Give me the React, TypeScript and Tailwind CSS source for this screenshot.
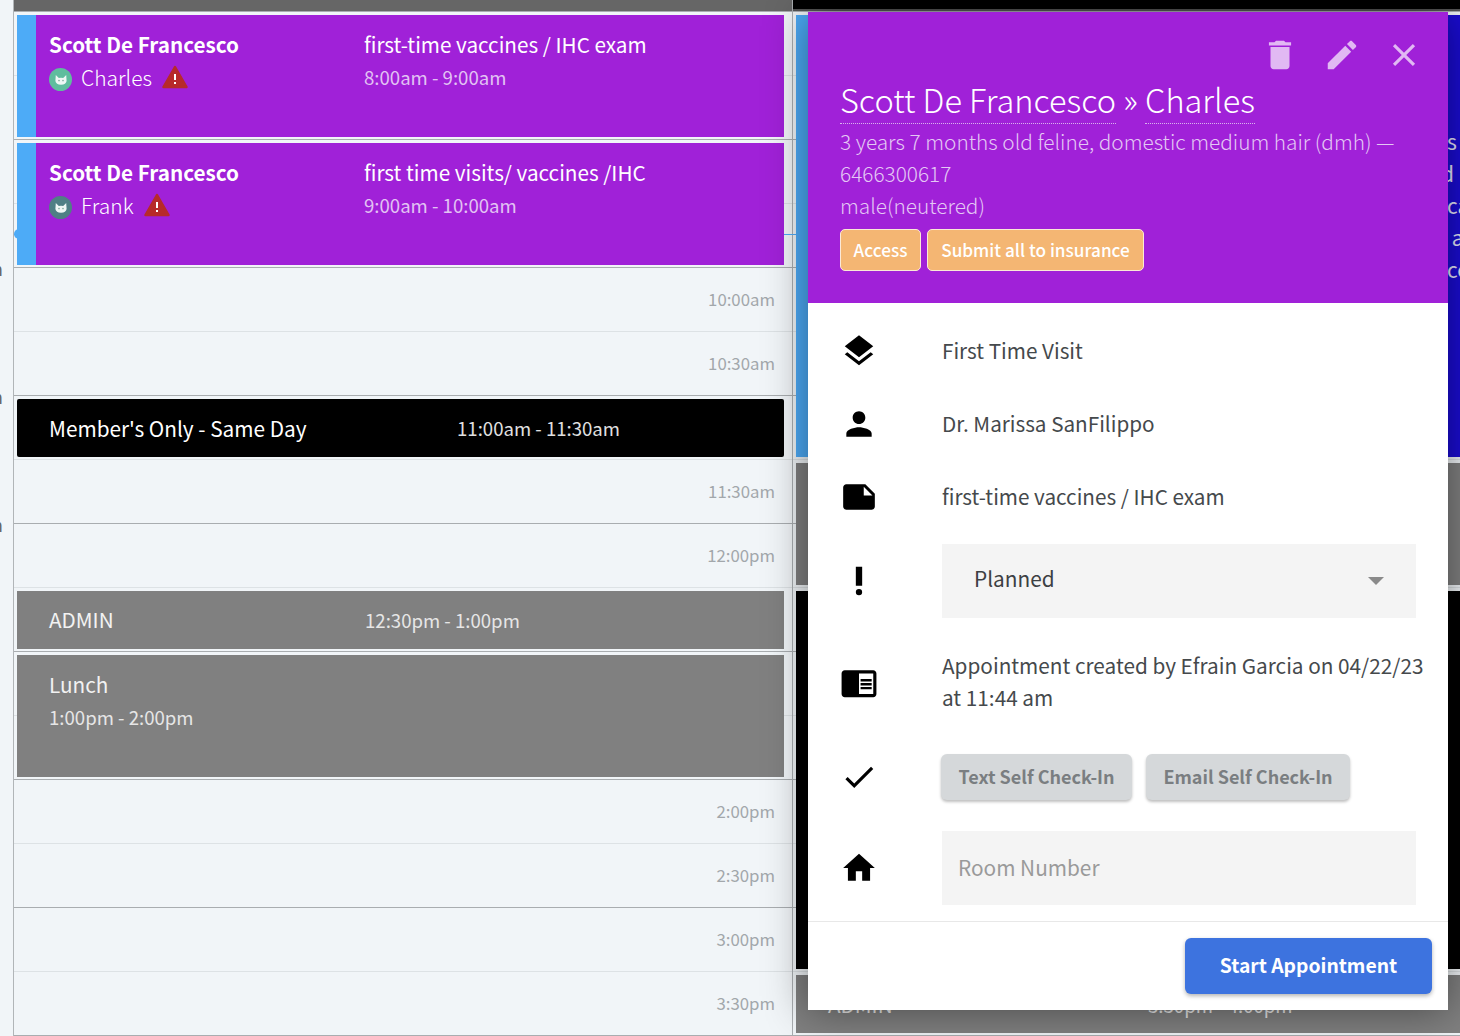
const ROWS = [
  "8:00am", "8:30am", "9:00am", "9:30am", "10:00am", "10:30am", "11:00am", "11:30am",
  "12:00pm", "12:30pm", "1:00pm", "1:30pm", "2:00pm", "2:30pm", "3:00pm", "3:30pm",
];

function Icon({ d, className }: { d: string; className: string }) {
  return (
    <svg viewBox="0 0 24 24" className={className} fill="currentColor">
      <path d={d} />
    </svg>
  );
}

const ICONS = {
  trash: "M6 19c0 1.1.9 2 2 2h8c1.1 0 2-.9 2-2V7H6v12zM19 4h-3.5l-1-1h-5l-1 1H5v2h14V4z",
  edit: "M3 17.25V21h3.75L17.81 9.94l-3.75-3.75L3 17.25zM20.71 7.04c.39-.39.39-1.02 0-1.41l-2.34-2.34c-.39-.39-1.02-.39-1.41 0l-1.83 1.83 3.75 3.75 1.83-1.83z",
  close: "M19 6.41L17.59 5 12 10.59 6.41 5 5 6.41 10.59 12 5 17.59 6.41 19 12 13.41 17.59 19 19 17.59 13.41 12z",
  layers: "M11.99 18.54l-7.37-5.73L3 14.07l9 7 9-7-1.63-1.27-7.38 5.74zM12 16l7.36-5.73L21 9l-9-7-9 7 1.63 1.27L12 16z",
  person: "M12 12c2.21 0 4-1.79 4-4s-1.79-4-4-4-4 1.79-4 4 1.79 4 4 4zm0 2c-2.67 0-8 1.34-8 4v2h16v-2c0-2.66-5.33-4-8-4z",
  note: "M22 10l-6-6H4c-1.1 0-2 .9-2 2v12.01c0 1.1.9 1.99 2 1.99l16-.01c1.1 0 2-.89 2-1.99v-8zm-7-4.5l5.5 5.5H15V5.5z",
  priority: "M10 3h4v12h-4zM12 17a2 2 0 1 1 0 4 2 2 0 0 1 0-4z",
  reader: "M13 12h7v1.5h-7zm0-2.5h7V11h-7zm0 5h7V16h-7zM21 4H3c-1.1 0-2 .9-2 2v13c0 1.1.9 2 2 2h18c1.1 0 2-.9 2-2V6c0-1.1-.9-2-2-2zm0 15h-9V6h9v13z",
  check: "M9 16.17L4.83 12l-1.42 1.41L9 19 21 7l-1.41-1.41z",
  home: "M10 20v-6h4v6h5v-8h3L12 3 2 12h3v8z",
};

function CatBadge({ className }: { className: string }) {
  return (
    <span className={`flex h-[23px] w-[23px] shrink-0 items-center justify-center rounded-full ${className}`}>
      <svg viewBox="0 0 12 12" className="h-[12px] w-[12px]">
        <path d="M0.800 1L3.800 4Q6 3.600 8.200 4L11.200 1L11.600 7Q11 10.500 6 10.800Q1 10.500 0.400 7z" fill="#eef7f4" />
        <circle cx="4" cy="6.600" r="0.800" fill="#7fa89c" />
        <circle cx="8" cy="6.600" r="0.800" fill="#7fa89c" />
      </svg>
    </span>
  );
}

function Warning() {
  return (
    <svg viewBox="0 0 26 24" className="h-[24px] w-[26px] shrink-0">
      <path d="M13 2L24.500 22H1.500z" fill="#b72a2a" stroke="#b72a2a" strokeWidth="2.500" strokeLinejoin="round" />
      <path d="M12 9h2v6h-2zM12 17h2v2h-2z" fill="#fff" />
    </svg>
  );
}

function AppointmentEvent({
  top, name, pet, badge, reason, time,
}: {
  top: string; name: string; pet: string; badge: string; reason: string; time: string;
}) {
  return (
    <div className={`absolute left-[3px] right-[8px] flex h-[122px] bg-[#a021d8] text-white ${top}`}>
      <div className="w-[19px] bg-[#4dabf7]" />
      <div className="grid flex-1 grid-cols-[315px_1fr] content-start pl-[13px] pt-[12px]">
        <div>
          <div className="text-[20.7px] font-bold leading-[34px]">{name}</div>
          <div className="flex h-[32px] items-center">
            <CatBadge className={`${badge} mt-[5px]`} />
            <span className="ml-[9px] text-[21px] font-light leading-[32px]">{pet}</span>
            <span className="ml-[10px]"><Warning /></span>
          </div>
        </div>
        <div>
          <div className="text-[20.7px] leading-[34px]">{reason}</div>
          <div className="text-[18.6px] leading-[32px] text-[#e2c3f3]">{time}</div>
        </div>
      </div>
    </div>
  );
}

function CalendarRows() {
  return (
    <div>
      {ROWS.map((label, i) => (
        <div
          key={label}
          className={`flex h-16 items-center justify-end border-b pr-[17px] text-[16.800px] text-[#a2a7ab] ${
            i % 2 === 0 ? "border-[#dde2e5]" : "border-[#a9adb0]"
          }`}
        >
          {label}
        </div>
      ))}
    </div>
  );
}

function DetailRow({ icon, children }: { icon: string; children: React.ReactNode }) {
  return (
    <div className="flex h-[73px] items-center">
      <div className="w-[102px]">
        <Icon d={icon} className="h-[38px] w-[38px]" />
      </div>
      <div className="text-[20.700px] text-[#45494c]">{children}</div>
    </div>
  );
}

export default function App() {
  return (
    <div className="relative flex h-[1036px] w-[1460px] overflow-hidden bg-[#f1f5f8] font-['Noto_Sans_CJK_KR','Noto_Sans',sans-serif]">
      {/* clipped hour labels */}
      <div className="w-[14px] shrink-0 overflow-hidden border-r border-[#b1b5b8] pt-[204px] text-[18px] text-[#666]">
        {["9:00am", "10:00am", "11:00am"].map((t) => (
          <div key={t} className="flex h-32 items-center justify-end whitespace-nowrap pr-[10px]">{t}</div>
        ))}
      </div>

      {/* first column */}
      <div className="relative w-[779px] shrink-0 border-r border-[#a9adb0]">
        <div className="h-3 border-b border-[#a9adb0] bg-[#666]" />
        <CalendarRows />
        {/* current time marker */}
        <div className="absolute left-0 right-[-4px] top-[234px] h-px bg-[#4dabf7]" />
        <div className="absolute left-0 top-[229px] h-[10px] w-[6px] rounded-l-full bg-[#4dabf7]" />
        <AppointmentEvent
          top="top-[15px]"
          name="Scott De Francesco"
          pet="Charles"
          badge="bg-[#5fbd9e]"
          reason="first-time vaccines / IHC exam"
          time="8:00am - 9:00am"
        />
        <AppointmentEvent
          top="top-[143px]"
          name="Scott De Francesco"
          pet="Frank"
          badge="bg-[#4f8085]"
          reason="first time visits/ vaccines /IHC"
          time="9:00am - 10:00am"
        />
        <div className="absolute left-[3px] right-[8px] top-[399px] flex h-[58px] items-center rounded-[2px] bg-black pl-[32px] text-white">
          <span className="w-[408px] pt-[2px] text-[20.800px]">Member's Only - Same Day</span>
          <span className="text-[18.600px] text-[#e0e0e0]">11:00am - 11:30am</span>
        </div>
        <div className="absolute left-[3px] right-[8px] top-[591px] flex h-[58px] items-center bg-[#808080] pl-[32px] text-[#f2f2f2]">
          <span className="w-[316px] text-[20.700px]">ADMIN</span>
          <span className="text-[18.600px] text-[#e6e6e6]">12:30pm - 1:00pm</span>
        </div>
        <div className="absolute left-[3px] right-[8px] top-[655px] h-[122px] bg-[#808080] pl-[32px] pt-[12px] text-[#f2f2f2]">
          <div className="text-[20.700px] leading-[34px]">Lunch</div>
          <div className="text-[18.600px] leading-[32px] text-[#e6e6e6]">1:00pm - 2:00pm</div>
        </div>
      </div>

      {/* second column, mostly behind the panel */}
      <div className="relative flex-1">
        <div className="h-3 border-b border-[#a9adb0] bg-[linear-gradient(#000_9px,#555_9px)]" />
        <CalendarRows />
        <div className="absolute left-[3px] right-0 top-[15px] flex h-[442px] bg-[#1a0cd2] text-[21px] leading-[32px] text-[#e6e6fb]">
          <div className="w-[19px] bg-[#4dabf7]" />
          <div className="absolute left-[651px] top-[110px] whitespace-pre">
            <div>s</div>
            <div className="-ml-[6px]">d</div>
            <div>ca</div>
            <div> a</div>
            <div>ce</div>
          </div>
        </div>
        <div className="absolute left-[3px] right-0 top-[463px] h-[122px] bg-[#808080]" />
        <div className="absolute left-[3px] right-0 top-[591px] h-[378px] bg-black" />
        <div className="absolute left-[3px] right-0 top-[975px] flex h-[58px] items-center bg-[#808080] pl-[32px] pt-[2px] text-[#e6e6e6]">
          <span className="w-[320px] text-[20.700px]">ADMIN</span>
          <span className="text-[18.600px]">3:30pm - 4:00pm</span>
        </div>
      </div>

      {/* appointment panel */}
      <div className="absolute left-[808px] top-3 flex h-[998px] w-[640px] flex-col bg-white shadow-[0_0_40px_rgba(0,0,0,0.45)]">
        <div className="h-[291px] shrink-0 bg-[#a021d8] px-8 pt-6">
          <div className="-mr-[7px] flex h-[44px] justify-end gap-6 text-[#e1b9f3]">
            <Icon d={ICONS.trash} className="h-[38px] w-[38px]" />
            <Icon d={ICONS.edit} className="h-[38px] w-[38px]" />
            <Icon d={ICONS.close} className="h-[38px] w-[38px]" />
          </div>
          <div className="h-[44px] text-[32.500px] font-light leading-[38px] text-white">
            <span className="inline-block border-b border-dotted border-[#d9b3ee] pb-[5px]">Scott De Francesco</span>
            {" » "}
            <span className="inline-block border-b border-dotted border-[#d9b3ee] pb-[5px]">Charles</span>
          </div>
          <div className="mt-px text-[20.800px] font-light leading-[32px] text-[#e4c8f4]">
            <div className="whitespace-nowrap">3 years 7 months old feline, domestic medium hair (dmh) —</div>
            <div>6466300617</div>
            <div>male(neutered)</div>
          </div>
          <div className="mt-2 flex gap-[6px]">
            <button className="h-[42px] w-[81px] rounded-[5px] border border-[#fbe9d6] bg-[#f4b673] text-[17.200px] font-medium text-white">Access</button>
            <button className="h-[42px] w-[217px] rounded-[5px] border border-[#fbe9d6] bg-[#f4b673] text-[17.200px] font-medium text-white">Submit all to insurance</button>
          </div>
        </div>

        <div className="flex-1 px-8 pt-[11px] text-black">
          <DetailRow icon={ICONS.layers}>First Time Visit</DetailRow>
          <DetailRow icon={ICONS.person}>Dr. Marissa SanFilippo</DetailRow>
          <DetailRow icon={ICONS.note}>first-time vaccines / IHC exam</DetailRow>

          <div className="mt-[11px] flex h-[74px] items-center">
            <div className="w-[102px]"><Icon d={ICONS.priority} className="h-[38px] w-[38px]" /></div>
            <div className="flex h-full flex-1 items-center justify-between bg-[#f4f4f4] pb-1 pl-[32px] pr-[32px] text-[20.800px] text-[#3c4043]">
              Planned
              <span className="mt-1 h-0 w-0 border-x-[8px] border-t-[8px] border-x-transparent border-t-[#8a8a8a]" />
            </div>
          </div>

          <div className="mt-[31px] flex items-center">
            <div className="w-[102px] pt-[4px]"><Icon d={ICONS.reader} className="h-[38px] w-[38px]" /></div>
            <div className="-mr-2 flex-1 text-[20.750px] leading-[32px] text-[#45494c]">
              Appointment created by Efrain Garcia on 04/22/23 at 11:44 am
            </div>
          </div>

          <div className="mt-[41px] flex h-[46px] items-center">
            <div className="w-[101px]"><Icon d={ICONS.check} className="h-[38px] w-[38px]" /></div>
            <div className="flex gap-[14px]">
              <button className="h-[46px] w-[191px] rounded-[6px] bg-[#d5d8da] pb-[2px] text-[18px] font-semibold text-[#7a7e81] shadow-[0_2px_3px_rgba(0,0,0,0.25)]">Text Self Check-In</button>
              <button className="h-[46px] w-[204px] rounded-[6px] bg-[#d5d8da] pb-[2px] text-[18px] font-semibold text-[#7a7e81] shadow-[0_2px_3px_rgba(0,0,0,0.25)]">Email Self Check-In</button>
            </div>
          </div>

          <div className="mt-[31px] flex h-[74px] items-center">
            <div className="w-[102px]"><Icon d={ICONS.home} className="h-[38px] w-[38px]" /></div>
            <input
              placeholder="Room Number"
              className="h-full flex-1 bg-[#f4f4f4] pb-[3px] pl-[16px] pr-4 text-[20.800px] outline-none placeholder:text-[#9a9a9a]"
            />
          </div>
        </div>

        <div className="flex h-[89px] shrink-0 items-start justify-end border-t border-[#e8e8e8] pr-4 pt-4">
          <button className="h-[56px] w-[247px] rounded-[6px] bg-[#3d73df] pb-[2px] text-[19.300px] font-bold text-white shadow-[0_2px_4px_rgba(0,0,0,0.3)]">Start Appointment</button>
        </div>
      </div>
    </div>
  );
}
